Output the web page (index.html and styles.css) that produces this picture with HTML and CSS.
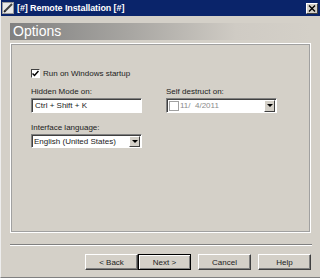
FILE: index.html
```html
<!DOCTYPE html>
<html lang="en">
<head>
    <meta charset="UTF-8">
    <title>[#] Remote Installation [#]</title>
    <link rel="stylesheet" href="styles.css">
</head>
<body>
    <div class="window">
        <div class="titlebar">
            <svg class="app-icon" width="12" height="12" viewBox="0 0 12 12">
                <rect x="0.5" y="0.5" width="11" height="11" fill="#e8e8e8" stroke="#9a9a9a"/>
                <path d="M2 10 L10 2" stroke="#404040" stroke-width="2"/>
                <path d="M2 10 L4 10 L2 8 Z" fill="#202020"/>
            </svg>
            <span class="title">[#] Remote Installation [#]</span>
            <div class="close-btn">
                <svg width="8" height="7" viewBox="0 0 8 7">
                    <path d="M1 0.5 L7 6.5 M7 0.5 L1 6.5" stroke="#000" stroke-width="1.4"/>
                </svg>
            </div>
        </div>

        <div class="content">
            <div class="header">Options</div>

            <div class="panel">
                <label class="check-row">
                    <span class="checkbox checked">
                        <svg width="7" height="7" viewBox="0 0 7 7">
                            <path d="M0.5 3.5 L2.5 5.5 L6.5 1" stroke="#000" stroke-width="1.5" fill="none"/>
                        </svg>
                    </span>
                    Run on Windows startup
                </label>

                <div class="fields">
                    <div class="field">
                        <div class="field-label">Hidden Mode on:</div>
                        <div class="textbox">Ctrl + Shift + K</div>
                    </div>
                    <div class="field">
                        <div class="field-label">Self destruct on:</div>
                        <div class="textbox date">
                            <span class="checkbox small"></span>
                            <span class="disabled">11/&nbsp; 4/2011</span>
                            <span class="drop-btn"><span class="arrow"></span></span>
                        </div>
                    </div>
                    <div class="field">
                        <div class="field-label">Interface language:</div>
                        <div class="combo">
                            <span>English (United States)</span>
                            <span class="drop-btn"><span class="arrow"></span></span>
                        </div>
                    </div>
                </div>
            </div>

            <div class="separator"></div>

            <div class="buttons">
                <div class="btn">&lt; Back</div>
                <div class="btn default">Next &gt;</div>
                <div class="btn gap">Cancel</div>
                <div class="btn gap">Help</div>
            </div>
        </div>
    </div>
</body>
</html>
```

FILE: styles.css
```css
body {
    margin: 0;
    font-family: "Liberation Sans", Arial, sans-serif;
    font-size: 8px;
    color: #222;
    background-color: #d4d0c8;
}
.window {
    width: 320px;
    height: 278px;
    box-sizing: border-box;
    background-color: #d4d0c8;
    border-left: 1px solid #eeeeee;
    border-bottom: 1px solid #808080;
}
.titlebar {
    height: 16px;
    background-color: #0a246a;
    display: flex;
    align-items: center;
    padding: 0 2px 0 1px;
}
.app-icon {
    margin-right: 3px;
}
.title {
    color: #fff;
    font-weight: bold;
    font-size: 9px;
    letter-spacing: -0.1px;
}
.close-btn {
    margin-left: auto;
    width: 12px;
    height: 11px;
    box-sizing: border-box;
    background-color: #d4d0c8;
    border: 1px solid;
    border-color: #fff #404040 #404040 #fff;
    display: flex;
    align-items: center;
    justify-content: center;
}
.content {
    padding: 7px 9px 0 9px;
}
.header {
    height: 17px;
    line-height: 17px;
    padding-left: 3px;
    color: #fff;
    font-size: 14px;
    background: linear-gradient(to right, #808080 0%, #a8a6a2 40%, #cfcbc4 75%, #d4d0c8 100%);
}
.panel {
    margin-top: 3px;
    height: 190px;
    box-sizing: border-box;
    border: 1px solid #fff;
    outline: 1px solid #a0a0a0;
    outline-offset: -2px;
    padding: 24px 0 0 20px;
}
.check-row {
    display: flex;
    align-items: center;
    gap: 3px;
    height: 10px;
}
.checkbox {
    width: 9px;
    height: 9px;
    box-sizing: border-box;
    background-color: #fff;
    border: 1px solid;
    border-color: #404040 #fff #fff #404040;
    display: flex;
    align-items: center;
    justify-content: center;
}
.fields {
    display: grid;
    grid-template-columns: 111px 111px;
    column-gap: 24px;
    row-gap: 10px;
    margin-top: 9px;
}
.field-label {
    height: 10px;
    line-height: 10px;
    margin-bottom: 1px;
}
.textbox {
    height: 15px;
    box-sizing: border-box;
    background-color: #fff;
    border: 1px solid;
    border-color: #808080 #fff #fff #808080;
    box-shadow: inset 1px 1px 0 #404040;
    display: flex;
    align-items: center;
    padding-left: 3px;
}
.textbox.date {
    padding-left: 2px;
    gap: 1px;
}
.checkbox.small {
    border-color: #a0a0a0;
    width: 10px;
    height: 10px;
}
.disabled {
    color: #8a8a8a;
}
.combo {
    height: 14px;
    box-sizing: border-box;
    margin-top: 1px;
    background-color: #fff;
    border: 1px solid;
    border-color: #808080 #fff #fff #808080;
    box-shadow: inset 1px 1px 0 #404040;
    display: flex;
    align-items: center;
    padding-left: 2px;
}
.drop-btn {
    margin-left: auto;
    margin-right: 1px;
    width: 11px;
    height: 11px;
    box-sizing: border-box;
    background-color: #d4d0c8;
    border: 1px solid;
    border-color: #fff #404040 #404040 #fff;
    display: flex;
    align-items: center;
    justify-content: center;
}
.textbox .drop-btn {
    height: 12px;
}
.arrow {
    width: 0;
    height: 0;
    border-left: 3px solid transparent;
    border-right: 3px solid transparent;
    border-top: 3px solid #000;
}
.separator {
    margin-top: 11px;
    height: 1px;
    background-color: #808080;
    border-bottom: 1px solid #fff;
    margin-right: -1px;
}
.buttons {
    display: flex;
    justify-content: flex-end;
    margin-top: 8px;
}
.btn {
    width: 53px;
    height: 16px;
    box-sizing: border-box;
    border: 1px solid;
    border-color: #fff #404040 #404040 #fff;
    box-shadow: inset -1px -1px 0 #808080;
    display: flex;
    align-items: center;
    justify-content: center;
}
.btn.default {
    border-color: #000;
    box-shadow: inset 1px 1px 0 #fff, inset -1px -1px 0 #808080;
}
.btn.gap {
    margin-left: 7px;
}
```
